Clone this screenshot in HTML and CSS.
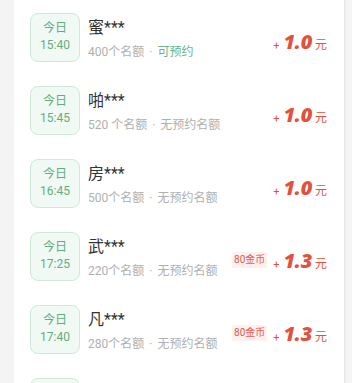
FILE: index.html
```html
<!DOCTYPE html>
<html lang="zh-CN">
<head>
    <meta charset="UTF-8">
    <meta name="viewport" content="width=device-width, initial-scale=1.0">
    <title>名额列表</title>
    <link rel="stylesheet" href="styles.css">
</head>
<body>
    <!-- 列表卡片 -->
    <div class="card">
        <div class="row">
            <div class="date"><span>今日</span><span>15:40</span></div>
            <div class="info">
                <div class="name">蜜***</div>
                <div class="sub">400个名额<span class="dot">·</span><em>可预约</em></div>
            </div>
            <div class="price"><i>+</i><b>1.0</b><small>元</small></div>
        </div>
        <div class="row">
            <div class="date"><span>今日</span><span>15:45</span></div>
            <div class="info">
                <div class="name">啪***</div>
                <div class="sub">520 个名额<span class="dot">·</span>无预约名额</div>
            </div>
            <div class="price"><i>+</i><b>1.0</b><small>元</small></div>
        </div>
        <div class="row">
            <div class="date"><span>今日</span><span>16:45</span></div>
            <div class="info">
                <div class="name">房***</div>
                <div class="sub">500个名额<span class="dot">·</span>无预约名额</div>
            </div>
            <div class="price"><i>+</i><b>1.0</b><small>元</small></div>
        </div>
        <div class="row">
            <div class="date"><span>今日</span><span>17:25</span></div>
            <div class="info">
                <div class="name">武***</div>
                <div class="sub">220个名额<span class="dot">·</span>无预约名额</div>
            </div>
            <div class="coin">80金币</div>
            <div class="price"><i>+</i><b>1.3</b><small>元</small></div>
        </div>
        <div class="row">
            <div class="date"><span>今日</span><span>17:40</span></div>
            <div class="info">
                <div class="name">凡***</div>
                <div class="sub">280个名额<span class="dot">·</span>无预约名额</div>
            </div>
            <div class="coin">80金币</div>
            <div class="price"><i>+</i><b>1.3</b><small>元</small></div>
        </div>
        <!-- 下一行只露出日期方块的上沿 -->
        <div class="row">
            <div class="date"></div>
        </div>
    </div>
</body>
</html>
```

FILE: styles.css
```css
*{
    margin: 0;
    padding: 0;
    box-sizing: border-box;
}
html,body{
    height: 100%;
    overflow: hidden;
}
body{
    background: #f4f4f4;
    font-family: Roboto, "Noto Sans CJK SC", sans-serif;
    color: #333;
}
.card{
    width: 330px;
    margin-left: 14px;
    background: #fff;
    padding: 0 17px 0 16px;
    box-shadow: 1px 0 2px rgba(0,0,0,0.08);
    min-height: 100%;
}
.row{
    display: flex;
    align-items: center;
    height: 73px;
    padding-top: 1px;
}
/* 日期方块 */
.date{
    width: 50px;
    height: 49px;
    border: 1px solid #cfe8d8;
    border-radius: 8px;
    background: #f1f9f4;
    color: #62ad7e;
    display: flex;
    flex-direction: column;
    align-items: center;
    justify-content: center;
    font-size: 12px;
    line-height: 17px;
    flex-shrink: 0;
}
.info{
    flex: 1;
    margin-left: 8px;
    margin-top: 4px;
}
.name{
    font-size: 16px;
    line-height: 20px;
    color: #333;
}
.sub{
    margin-top: 6px;
    font-size: 12px;
    line-height: 16px;
    color: #b0b0b0;
}
.sub .dot{
    margin: 0 5px;
}
.sub em{
    font-style: normal;
    color: #6cb487;
}
.coin{
    font-size: 10px;
    line-height: 16px;
    padding: 0 2px;
    background: #fdf0ef;
    color: #e35b4d;
    border-radius: 2px;
    margin-right: 6px;
    margin-top: 8px;
}
.price{
    display: flex;
    align-items: baseline;
    color: #e5503a;
    margin-top: 8px;
}
.price i{
    font-style: normal;
    font-size: 11px;
    margin-right: 4px;
}
.price b{
    font-size: 20px;
    font-style: italic;
    font-weight: 900;
    font-family: "Open Sans", Roboto, sans-serif;
    letter-spacing: -0.3px;
}
.price small{
    font-size: 12px;
    margin-left: 3px;
}
```
